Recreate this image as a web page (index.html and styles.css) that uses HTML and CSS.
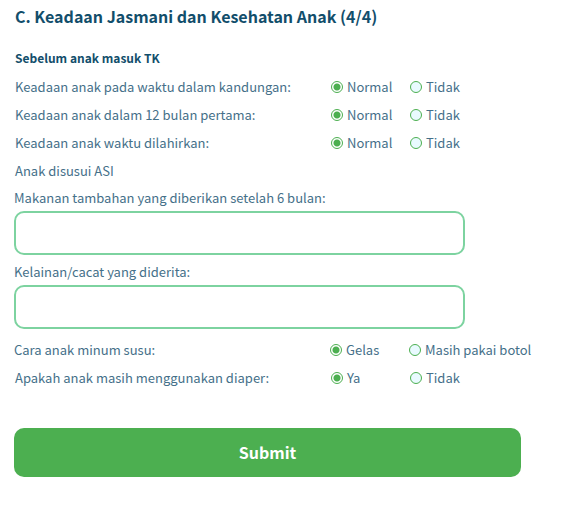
FILE: index.html
```html
<!DOCTYPE html>
<html lang="id">
<head>
<meta charset="utf-8">
<meta name="viewport" content="width=device-width, initial-scale=1">
<title>Keadaan Jasmani dan Kesehatan Anak</title>
<link rel="stylesheet" href="styles.css">
</head>
<body>
<form class="form">
  <h1 class="title">C. Keadaan Jasmani dan Kesehatan Anak (4/4)</h1>
  <h2 class="subtitle">Sebelum anak masuk TK</h2>
  <div class="row" role="radiogroup" aria-labelledby="q1">
    <span id="q1">Keadaan anak pada waktu dalam kandungan:</span>
    <label class="option"><input type="radio" name="kandungan" checked>Normal</label>
    <label class="option"><input type="radio" name="kandungan">Tidak</label>
  </div>
  <div class="row" role="radiogroup" aria-labelledby="q2">
    <span id="q2">Keadaan anak dalam 12 bulan pertama:</span>
    <label class="option"><input type="radio" name="pertama" checked>Normal</label>
    <label class="option"><input type="radio" name="pertama">Tidak</label>
  </div>
  <div class="row" role="radiogroup" aria-labelledby="q3">
    <span id="q3">Keadaan anak waktu dilahirkan:</span>
    <label class="option"><input type="radio" name="dilahirkan" checked>Normal</label>
    <label class="option"><input type="radio" name="dilahirkan">Tidak</label>
  </div>
  <p class="row">Anak disusui ASI</p>
  <div class="field">
    <label for="makanan">Makanan tambahan yang diberikan setelah 6 bulan:</label>
    <input class="text" type="text" id="makanan">
  </div>
  <div class="field">
    <label for="kelainan">Kelainan/cacat yang diderita:</label>
    <input class="text" type="text" id="kelainan">
  </div>
  <div class="row row-flush" role="radiogroup" aria-labelledby="q4">
    <span id="q4">Cara anak minum susu:</span>
    <label class="option"><input type="radio" name="susu" checked>Gelas</label>
    <label class="option"><input type="radio" name="susu">Masih pakai botol</label>
  </div>
  <div class="row" role="radiogroup" aria-labelledby="q5">
    <span id="q5">Apakah anak masih menggunakan diaper:</span>
    <label class="option"><input type="radio" name="diaper" checked>Ya</label>
    <label class="option"><input type="radio" name="diaper">Tidak</label>
  </div>
  <button class="submit" type="submit">Submit</button>
</form>
</body>
</html>
```
FILE: styles.css
```css
* {
  box-sizing: border-box;
}

body {
  margin: 0;
  background: #fff;
  color: #457089;
  font: 13px/28px "Noto Sans CJK SC", "Noto Sans", sans-serif;
}

.form {
  padding: 2px 54px 28px 14px;
}

.title,
.subtitle {
  margin: 0;
  padding-left: 1px;
  color: #124e6b;
  font-weight: 700;
}

.title {
  margin-bottom: 13px;
  font-size: 16px;
}

.subtitle {
  font-size: 12px;
  line-height: 30px;
}

.row {
  display: grid;
  grid-template-columns: 4fr 1fr 111px;
  align-items: center;
  margin: 0;
  padding-left: 1px;
  white-space: nowrap;
}

.row-flush {
  margin-top: 7px;
  padding: 0 1px 0 0;
}

.option {
  display: flex;
  align-items: center;
  gap: 4px;
}

.option input {
  appearance: none;
  flex: none;
  width: 12px;
  height: 12px;
  margin: 0;
  border: 1px solid #4caf50;
  border-radius: 50%;
  background: #e9faff;
}

.option input:checked {
  background: radial-gradient(circle, #4caf50 3px, #fff 4px);
}

.field {
  line-height: 26px;
}

.field + .field {
  margin-top: 4px;
}

.field label,
.text {
  display: block;
}

.text {
  width: 89%;
  height: 44px;
  padding: 0 12px;
  border: 2px solid #7dd3a0;
  border-radius: 10px;
  background: #fff;
  color: inherit;
  font: inherit;
}

.submit {
  display: block;
  width: 100%;
  height: 49px;
  margin-top: 36px;
  padding: 0 0 2px;
  border: 0;
  border-radius: 10px;
  background: #4caf50;
  color: #fff;
  font: inherit;
  font-size: 16px;
  font-weight: 700;
}
```
